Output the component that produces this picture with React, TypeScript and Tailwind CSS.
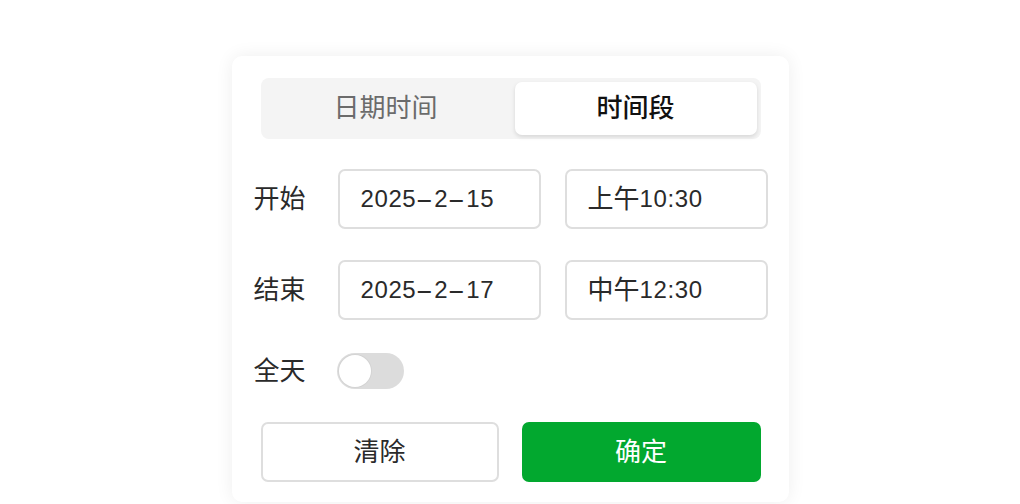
import React, { useState } from 'react';

const font = { fontFamily: "'Liberation Sans', 'Noto Sans CJK SC', sans-serif" };

// 日期里的连字符在参考图中较宽，单独放大
const renderValue = (value: string) => {
  const parts = value.split(/([-\u4e00-\u9fff]+)/).filter(Boolean);
  return parts.map((p, i) => {
    if (p === '-') {
      return (
        <span key={i} className="inline-block w-[18px] text-center scale-x-[2.2]">
          -
        </span>
      );
    }
    if (/[\u4e00-\u9fff]/.test(p)) {
      return (
        <span key={i} className="text-[26px] tracking-normal">
          {p}
        </span>
      );
    }
    return <span key={i}>{p}</span>;
  });
};

const Field: React.FC<{ value: string }> = ({ value }) => (
  <div className="w-[203px] h-[60px] shrink-0 rounded-[7px] border-2 border-[#dedede] bg-white flex items-center pl-[21px] text-[24px] tracking-[0.6px] text-[#2a2a2a]">
    {renderValue(value)}
  </div>
);

const Row: React.FC<{ label: string; date: string; time: string }> = ({ label, date, time }) => (
  <div className="flex items-center">
    <span className="w-[84px] shrink-0 text-[26px] text-[#2a2a2a]">{label}</span>
    <div className="flex gap-[24px]">
      <Field value={date} />
      <Field value={time} />
    </div>
  </div>
);

export default function App() {
  const [tab, setTab] = useState(1);
  const [allDay, setAllDay] = useState(false);

  const tabClass = (active: boolean) =>
    `rounded-[7px] flex items-center justify-center text-[26px] ${
      active ? 'bg-white shadow-[0_2px_4px_rgba(0,0,0,0.12)] text-[#111] font-medium' : 'text-[#6b6b6b]'
    }`;

  return (
    <div className="w-full h-[504px] bg-white overflow-hidden" style={font}>
      <div className="mx-auto mt-[56px] w-[557px] h-[446px] bg-white rounded-[10px] shadow-[0_0_18px_rgba(0,0,0,0.07)] pt-[22px] pl-[29px] pr-[28px] flex flex-col">
        {/* Segmented tabs */}
        <div className="h-[61px] w-[500px] rounded-[8px] bg-[#f4f4f4] p-[4px] grid grid-cols-2 gap-2">
          <button onClick={() => setTab(0)} className={tabClass(tab === 0)}>
            日期时间
          </button>
          <button onClick={() => setTab(1)} className={tabClass(tab === 1)}>
            时间段
          </button>
        </div>

        {/* Start / end rows */}
        <div className="-mx-[7px] mt-[30px] flex flex-col gap-[31px]">
          <Row label="开始" date="2025-2-15" time="上午10:30" />
          <Row label="结束" date="2025-2-17" time="中午12:30" />
        </div>

        {/* All day */}
        <div className="-ml-[7px] mt-[33px] flex items-center h-[36px]">
          <span className="w-[83px] shrink-0 text-[26px] text-[#2a2a2a]">全天</span>
          <button
            onClick={() => setAllDay(!allDay)}
            className={`w-[67px] h-[36px] rounded-full p-[2px] flex items-center ${allDay ? 'bg-[#02a82f] justify-end' : 'bg-[#dcdcdc] justify-start'}`}
          >
            <span className="w-[32px] h-[32px] rounded-full bg-white shadow-[0_0_0_1px_rgba(0,0,0,0.04)]" />
          </button>
        </div>

        {/* Actions */}
        <div className="mt-[33px] flex gap-[23px]">
          <button className="w-[238px] h-[60px] rounded-[7px] border-2 border-[#dedede] bg-white text-[26px] text-[#2a2a2a] flex items-center justify-center">
            清除
          </button>
          <button className="w-[239px] h-[60px] rounded-[7px] bg-[#02a82f] text-[26px] text-white flex items-center justify-center">
            确定
          </button>
        </div>
      </div>
    </div>
  );
}
